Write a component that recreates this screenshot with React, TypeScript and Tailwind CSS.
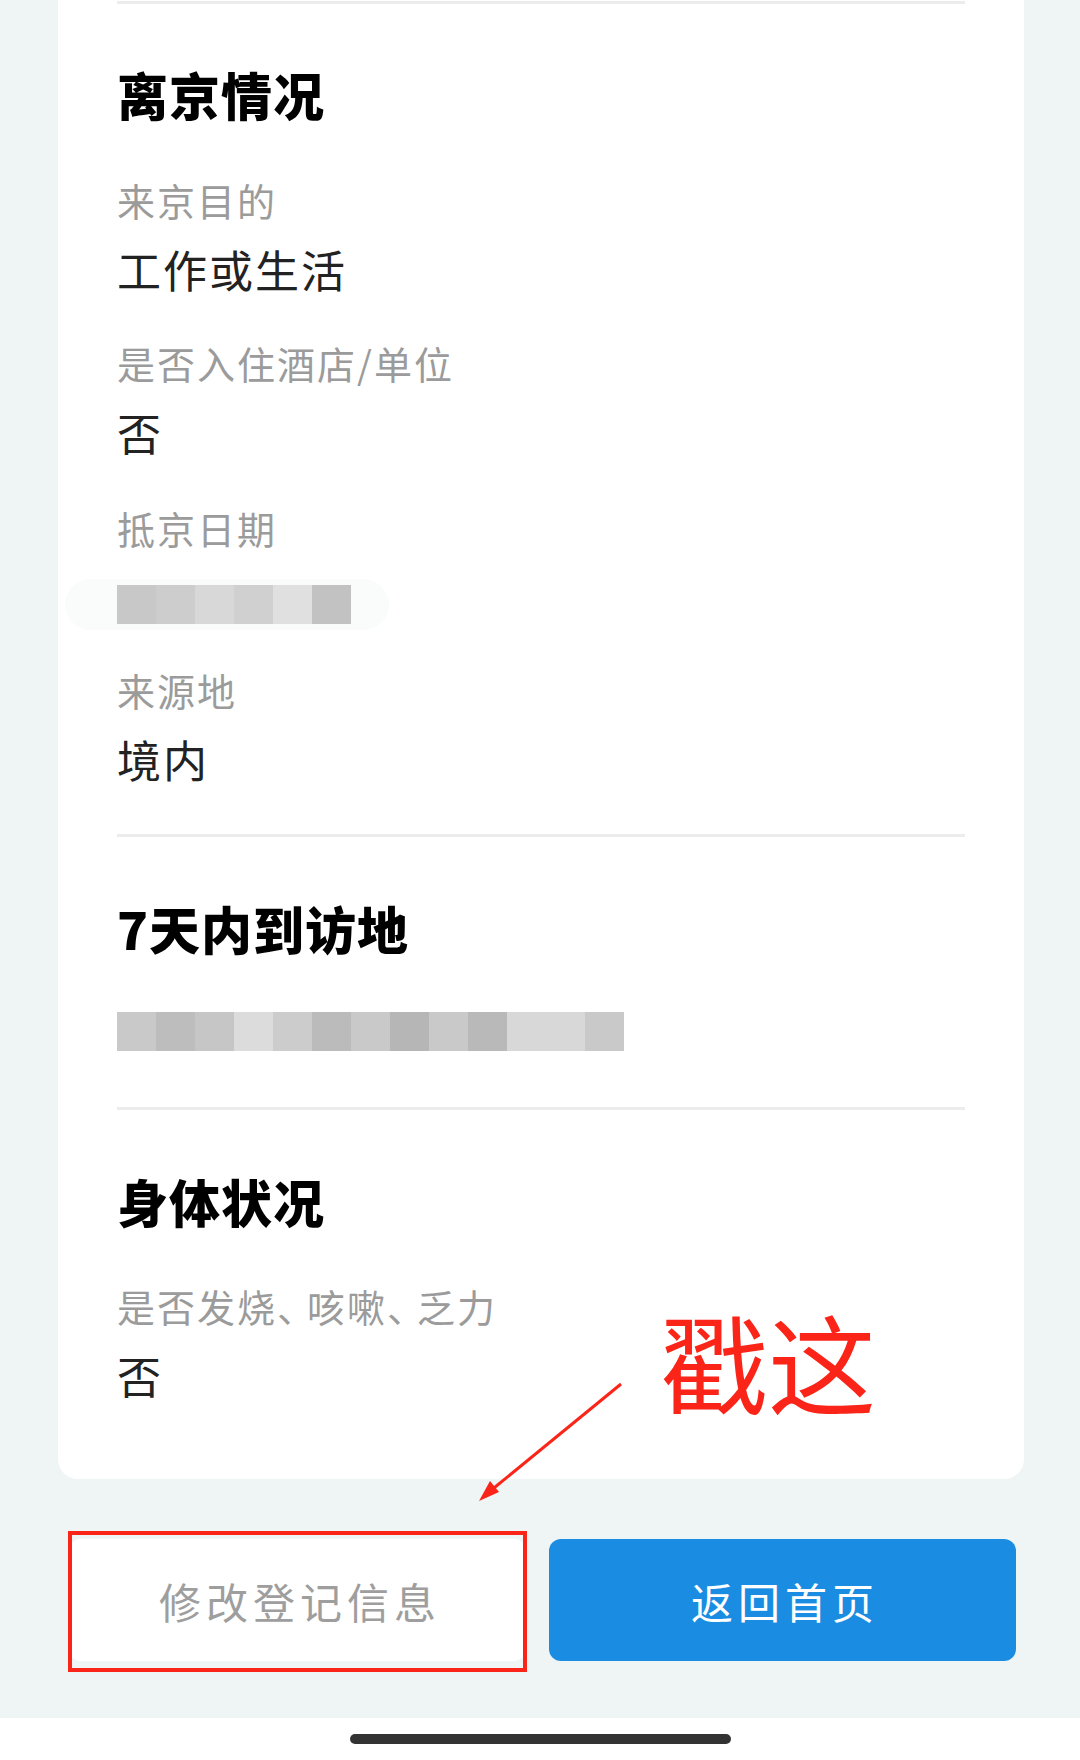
const cjk = "font-['Noto_Sans_CJK_SC','Noto_Sans',sans-serif]"

const dateMosaic = [
  'bg-[#c8c8c8]',
  'bg-[#cdcdcd]',
  'bg-[#d8d8d8]',
  'bg-[#d0d0d0]',
  'bg-[#e0e0e0]',
  'bg-[#c2c2c2]',
]

const placeMosaic = [
  'bg-[#c9c9c9]',
  'bg-[#bdbdbd]',
  'bg-[#c6c6c6]',
  'bg-[#dcdcdc]',
  'bg-[#cccccc]',
  'bg-[#bbbbbb]',
  'bg-[#c9c9c9]',
  'bg-[#b6b6b6]',
  'bg-[#c9c9c9]',
  'bg-[#b9b9b9]',
  'bg-[#d8d8d8]',
  'bg-[#d8d8d8]',
  'bg-[#c9c9c9]',
]

const Divider = ({ className = '' }: { className?: string }) => (
  <div className={`h-[3px] w-full bg-[#ececec] ${className}`} />
)

const Heading = ({ children, className = '' }: { children: React.ReactNode; className?: string }) => (
  <h2 className={`h-[60px] text-[51px] font-black leading-[60px] tracking-[1px] text-black ${className}`}>
    {children}
  </h2>
)

const Label = ({ children, className = '' }: { children: React.ReactNode; className?: string }) => (
  <div className={`h-[48px] text-[38px] leading-[48px] tracking-[2px] text-[#9b9b9b] ${className}`}>
    {children}
  </div>
)

const Value = ({ children }: { children: React.ReactNode }) => (
  <div className="mt-[17px] h-[56px] text-[44px] leading-[56px] tracking-[2px] text-[#222]">
    {children}
  </div>
)

// half-width enumeration comma, as the app renders it
const Comma = () => <span className="tracking-[11px] [font-feature-settings:'halt']">、</span>

const Mosaic = ({ cells, className = '' }: { cells: string[]; className?: string }) => (
  <div className={`flex h-[39px] ${className}`}>
    {cells.map((c, i) => (
      <div key={i} className={`h-full w-[39px] ${c}`} />
    ))}
  </div>
)

export default function App() {
  return (
    <div className={`relative flex h-[1760px] w-[1080px] flex-col overflow-hidden bg-[#eff4f4] ${cjk}`}>
      {/* card, top part scrolled away */}
      <div className="ml-[58px] w-[966px] rounded-b-[20px] bg-white px-[59px] pt-[1px] pb-[76px]">
        <Divider />

        <Heading className="mt-[60px]">离京情况</Heading>
        <Label className="mt-[52px]">来京目的</Label>
        <Value>工作或生活</Value>
        <Label className="mt-[42px]">是否入住酒店/单位</Label>
        <Value>否</Value>
        <Label className="mt-[44px]">抵京日期</Label>
        <div className="-ml-[52px] mt-[27px] w-fit rounded-full bg-[#fafbfb] py-[6px] pl-[52px] pr-[38px]">
          <Mosaic cells={dateMosaic} />
        </div>
        <Label className="mt-[36px]">来源地</Label>
        <Value>境内</Value>

        <Divider className="mt-[47px]" />
        <Heading className="mt-[61px]">7天内到访地</Heading>
        <Mosaic cells={placeMosaic} className="mt-[54px]" />

        <Divider className="mt-[56px]" />
        <Heading className="mt-[61px]">身体状况</Heading>
        <Label className="mt-[51px]">
          是否发烧<Comma />咳嗽<Comma />乏力
        </Label>
        <Value>否</Value>
      </div>

      {/* buttons */}
      <div className="mt-[60px] flex gap-[24px] pl-[70px]">
        <div className="relative">
          <button className="flex h-[122px] w-[455px] items-center justify-center rounded-[10px] bg-white pl-[5px] text-[42px] tracking-[5px] text-[#9e9e9e]">
            修改登记信息
          </button>
          <div className="pointer-events-none absolute -top-[8px] -left-[2px] -right-[2px] -bottom-[11px] border-[4px] border-[#fa2418]" />
        </div>
        <button className="flex h-[122px] w-[467px] items-center justify-center rounded-[12px] bg-[#1a8de3] pl-[5px] text-[42px] tracking-[5px] text-white">
          返回首页
        </button>
      </div>

      {/* home indicator */}
      <div className="mt-auto flex h-[42px] justify-center bg-white pt-[16px]">
        <div className="h-[10px] w-[381px] rounded-full bg-[#333]" />
      </div>

      {/* annotation */}
      <div className="pointer-events-none absolute left-[660px] top-[1306px] text-[108px] leading-none text-[#fa2418]">
        戳这
      </div>
      <svg className="pointer-events-none absolute left-0 top-0" width="1080" height="1760">
        <line x1="621" y1="1384" x2="489" y2="1492" stroke="#fa2418" strokeWidth="3" />
        <polygon points="479,1501 490,1481 499,1492" fill="#fa2418" />
      </svg>
    </div>
  )
}
